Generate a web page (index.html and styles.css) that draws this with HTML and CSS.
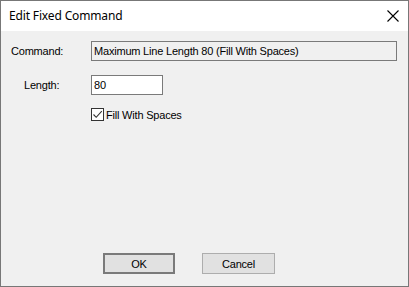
FILE: index.html
```html
<!DOCTYPE html>
<html lang="en">
<head>
    <meta charset="UTF-8">
    <title>Edit Fixed Command</title>
    <link rel="stylesheet" href="styles.css">
</head>
<body>
    <div class="window">
        <div class="titlebar">
            <span class="title">Edit Fixed Command</span>
            <svg class="close" width="12" height="12" viewBox="0 0 12 12">
                <path d="M0.5 0.5 L11.5 11.5 M11.5 0.5 L0.5 11.5" stroke="#000" stroke-width="1.1" fill="none"/>
            </svg>
        </div>
        <div class="content">
            <div class="row row-command">
                <label class="label label-command">Command:</label>
                <div class="field field-readonly">Maximum Line Length 80 (Fill With Spaces)</div>
            </div>
            <div class="row row-length">
                <label class="label label-length">Length:</label>
                <div class="field field-length">80</div>
            </div>
            <div class="row row-check">
                <span class="checkbox">
                    <svg width="11" height="11" viewBox="0 0 11 11">
                        <path d="M1.5 5.5 L4.2 8.3 L9.8 2.2" stroke="#333" stroke-width="1.1" fill="none"/>
                    </svg>
                </span>
                <span class="check-label">Fill With Spaces</span>
            </div>
            <div class="buttons">
                <button class="btn btn-default">OK</button>
                <button class="btn">Cancel</button>
            </div>
        </div>
    </div>
</body>
</html>
```

FILE: styles.css
```css
body {
    margin: 0;
    padding: 0;
    background: #f0f0f0;
    font-family: "Liberation Sans", Arial, sans-serif;
    font-size: 11px;
    letter-spacing: -0.2px;
    color: #000;
}

.window {
    width: 407px;
    height: 285px;
    border: 1px solid #777;
    display: flex;
    flex-direction: column;
    overflow: hidden;
}

.titlebar {
    height: 30px;
    background: #fff;
    display: flex;
    align-items: center;
    justify-content: space-between;
    padding: 0 9px 0 8px;
    flex-shrink: 0;
}

.title {
    font-family: "Noto Sans", "Open Sans", sans-serif;
    font-size: 12px;
    letter-spacing: -0.15px;
    color: #000;
    margin-top: -1px;
}

.close {
    display: block;
}

.content {
    flex: 1;
    background: #f0f0f0;
    display: flex;
    flex-direction: column;
}

.row {
    display: flex;
    align-items: center;
}

.row-command {
    margin-top: 10px;
}

.row-length {
    margin-top: 14px;
}

.row-check {
    margin-top: 13px;
    padding-left: 90px;
}

.label-command {
    width: 80px;
    padding-left: 10px;
}

.label-length {
    width: 67px;
    padding-left: 23px;
}

.field {
    box-sizing: border-box;
    height: 20px;
    border: 1px solid #7a7a7a;
    padding: 0 2px;
    line-height: 18px;
    white-space: nowrap;
}

.field-readonly {
    width: 306px;
    background: #f0f0f0;
}

.field-length {
    width: 72px;
    background: #fff;
}

.checkbox {
    box-sizing: border-box;
    width: 13px;
    height: 13px;
    border: 1px solid #333;
    background: #fff;
    display: flex;
    align-items: center;
    justify-content: center;
}

.checkbox svg {
    display: block;
}

.check-label {
    margin-left: 2px;
}

.buttons {
    margin-top: auto;
    padding: 0 0 12px 102px;
    display: flex;
    gap: 27px;
}

.btn {
    box-sizing: border-box;
    width: 73px;
    height: 21px;
    border: 1px solid #adadad;
    background: #e1e1e1;
    font-family: "Liberation Sans", Arial, sans-serif;
    font-size: 11px;
    letter-spacing: -0.2px;
    color: #000;
    padding: 0;
}

.btn-default {
    border: 2px solid #7a7a7a;
    width: 72px;
}
```
